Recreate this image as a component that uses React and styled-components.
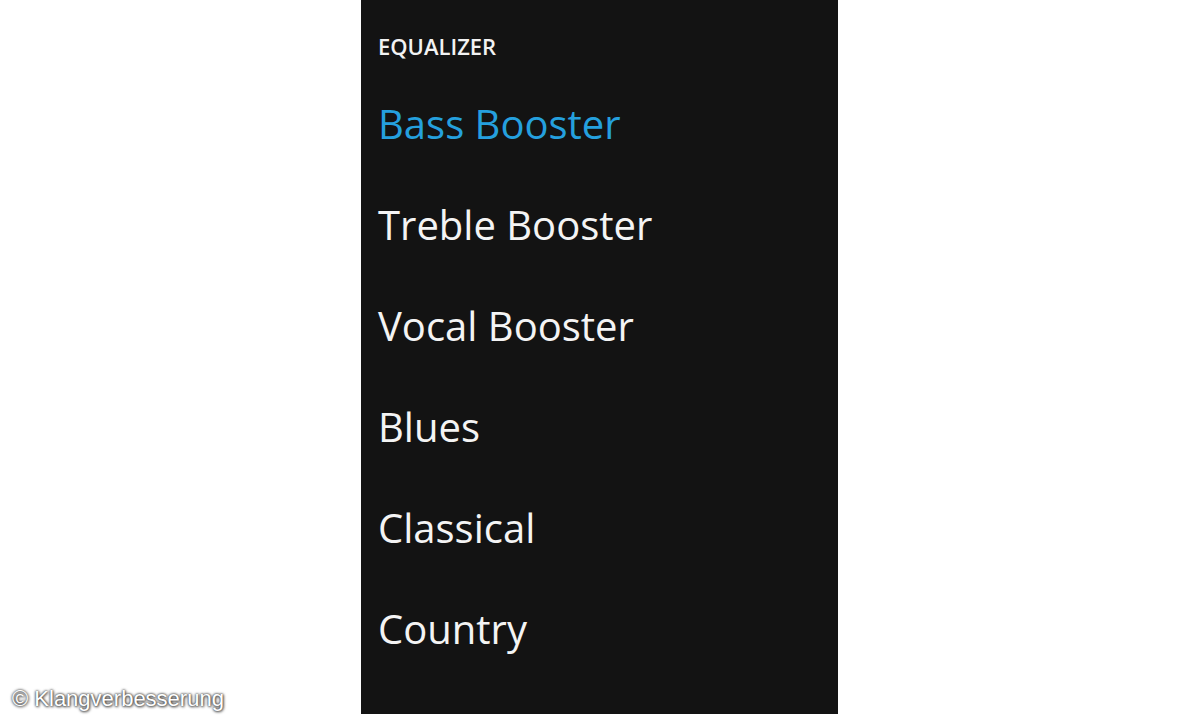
import React from 'react'
import styled, { createGlobalStyle } from 'styled-components'

const GlobalStyle = createGlobalStyle`
  html, body {
    margin: 0;
    padding: 0;
    background: #ffffff;
  }
`

const presets = [
  { name: 'Bass Booster', active: true },
  { name: 'Treble Booster' },
  { name: 'Vocal Booster' },
  { name: 'Blues' },
  { name: 'Classical' },
  { name: 'Country' }
]

const App = () => {
  return (
    <Page>
      <GlobalStyle />
      <LeftGutter>
        <Credit>© Klangverbesserung</Credit>
      </LeftGutter>
      <Panel>
        <Header>EQUALIZER</Header>
        <PresetList>
          {presets.map(p => (
            <Preset key={p.name} $active={p.active}>{p.name}</Preset>
          ))}
        </PresetList>
      </Panel>
    </Page>
  )
}

const Page = styled.div`
  width: 1200px;
  height: 720px;
  display: flex;
  align-items: flex-start;
  background: #ffffff;
  overflow: hidden;
`

const LeftGutter = styled.div`
  width: 361px;
  height: 720px;
  display: flex;
  flex-direction: column;
  justify-content: flex-end;
  padding: 0 0 8px 12px;
  box-sizing: border-box;
`

const Credit = styled.div`
  font-family: "Liberation Sans", Arial, sans-serif;
  font-size: 22px;
  letter-spacing: 0;
  color: #ffffff;
  text-shadow: 0 0 3px #444, 0 0 2px #555, 1px 1px 3px #666;
  white-space: nowrap;
`

const Panel = styled.div`
  width: 477px;
  height: 714px;
  background: #131313;
  padding: 34px 0 0 17px;
  box-sizing: border-box;
  display: flex;
  flex-direction: column;
`

const Header = styled.div`
  font-family: "Open Sans", "Noto Sans", sans-serif;
  font-weight: 600;
  font-size: 22px;
  line-height: 24px;
  color: #f2f2f2;
`

const PresetList = styled.div`
  margin-top: 15px;
  display: flex;
  flex-direction: column;
`

const Preset = styled.div`
  font-family: "Open Sans", "Noto Sans", sans-serif;
  font-size: 40px;
  line-height: 101px;
  height: 101px;
  color: ${p => (p.$active ? '#25a0de' : '#f4f4f4')};
  white-space: nowrap;
`

export default App
